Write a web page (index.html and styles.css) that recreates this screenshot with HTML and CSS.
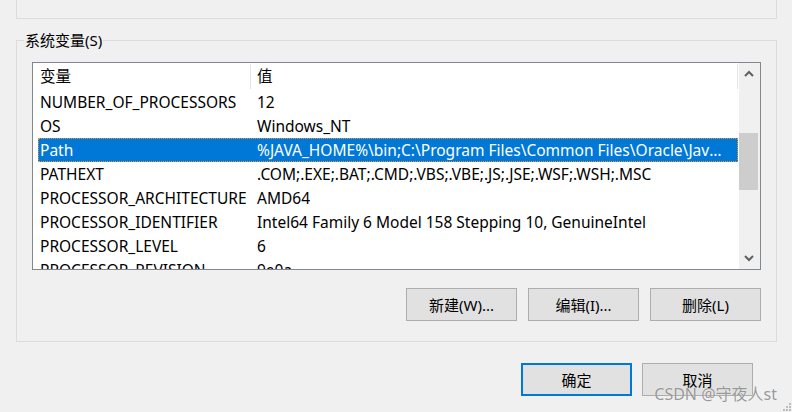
FILE: index.html
```html
<!DOCTYPE html>
<html lang="zh-CN">
<head>
    <meta charset="UTF-8">
    <title>环境变量</title>
    <link rel="stylesheet" href="styles.css">
</head>
<body>
    <div class="top-box"></div>

    <fieldset class="group">
        <legend>系统变量(S)</legend>
        <div class="list">
            <div class="list-main">
                <div class="list-head">
                    <div class="head-name">变量</div>
                    <div class="head-value">值</div>
                </div>
                <div class="row"><span class="col-name">NUMBER_OF_PROCESSORS</span><span class="col-value">12</span></div>
                <div class="row"><span class="col-name">OS</span><span class="col-value">Windows_NT</span></div>
                <div class="row selected"><span class="col-name">Path</span><span class="col-value">%JAVA_HOME%\bin;C:\Program Files\Common Files\Oracle\Java\javapath;C:\Windows\system32</span></div>
                <div class="row"><span class="col-name">PATHEXT</span><span class="col-value">.COM;.EXE;.BAT;.CMD;.VBS;.VBE;.JS;.JSE;.WSF;.WSH;.MSC</span></div>
                <div class="row"><span class="col-name">PROCESSOR_ARCHITECTURE</span><span class="col-value">AMD64</span></div>
                <div class="row"><span class="col-name">PROCESSOR_IDENTIFIER</span><span class="col-value">Intel64 Family 6 Model 158 Stepping 10, GenuineIntel</span></div>
                <div class="row"><span class="col-name">PROCESSOR_LEVEL</span><span class="col-value">6</span></div>
                <div class="row"><span class="col-name">PROCESSOR_REVISION</span><span class="col-value">9e0a</span></div>
            </div>
            <div class="scrollbar">
                <div class="arrow">
                    <svg width="10" height="7" viewBox="0 0 10 7"><polyline points="1,6 5,2 9,6" fill="none" stroke="#606060" stroke-width="2"/></svg>
                </div>
                <div class="track"><div class="thumb"></div></div>
                <div class="arrow">
                    <svg width="10" height="7" viewBox="0 0 10 7"><polyline points="1,1 5,5 9,1" fill="none" stroke="#606060" stroke-width="2"/></svg>
                </div>
            </div>
        </div>
        <div class="actions">
            <button>新建(W)...</button>
            <button>编辑(I)...</button>
            <button>删除(L)</button>
        </div>
    </fieldset>

    <div class="dialog-actions">
        <button class="primary">确定</button>
        <button>取消</button>
    </div>

    <div class="watermark">CSDN @守夜人st</div>
    <svg class="grip" width="10" height="10" viewBox="0 0 10 10">
        <rect x="8" y="2" width="2" height="2" fill="#bdbdbd"/>
        <rect x="5" y="5" width="2" height="2" fill="#bdbdbd"/>
        <rect x="8" y="5" width="2" height="2" fill="#bdbdbd"/>
        <rect x="2" y="8" width="2" height="2" fill="#bdbdbd"/>
        <rect x="5" y="8" width="2" height="2" fill="#bdbdbd"/>
        <rect x="8" y="8" width="2" height="2" fill="#bdbdbd"/>
    </svg>
</body>
</html>
```

FILE: styles.css
```css
body {
    margin: 0;
    width: 792px;
    height: 412px;
    overflow: hidden;
    position: relative;
    background: #f0f0f0;
    color: #000;
    font-family: "Noto Sans", "Noto Sans CJK SC", sans-serif;
    font-size: 15px;
}

.top-box {
    height: 18px;
    margin: 0 15px 0 16px;
    border: 1px solid #dcdcdc;
    border-top: 0;
}

.group {
    margin: 11px 15px 0 16px;
    padding: 12px 15px 20px 15px;
    border: 1px solid #dcdcdc;
    min-width: 0;
}

.group legend {
    margin-left: -8px;
    padding: 0 1px;
    height: 20px;
    line-height: 20px;
}

.list {
    display: flex;
    height: 206px;
    border: 1px solid #828790;
    background: #fff;
    font-size: 15.5px;
}

.list-main {
    flex: 1;
    min-width: 0;
    overflow: hidden;
}

.list-head {
    display: flex;
    height: 27px;
    line-height: 27px;
}

.head-name {
    width: 218px;
    padding-left: 7px;
    box-sizing: border-box;
    border-right: 1px solid #e5e5e5;
    margin: 1px 0;
    line-height: 25px;
}

.head-value {
    width: 487px;
    padding-left: 6px;
    box-sizing: border-box;
    border-right: 1px solid #e5e5e5;
    margin: 1px 0;
    line-height: 25px;
}

.row {
    display: flex;
    height: 24px;
    line-height: 24px;
    margin-left: 5px;
    margin-right: 1px;
    white-space: nowrap;
}

.col-name {
    width: 219px;
    flex-shrink: 0;
    padding-left: 2px;
    box-sizing: border-box;
    overflow: hidden;
}

.col-value {
    flex: 1;
    min-width: 0;
    padding-right: 8px;
    overflow: hidden;
    text-overflow: ellipsis;
}

.row.selected {
    background: #0078d7;
    color: #fff;
    outline: 1px dotted #f0953a;
    outline-offset: -1px;
}

.scrollbar {
    width: 21px;
    display: flex;
    flex-direction: column;
    background: #f0f0f0;
}

.arrow {
    height: 21px;
    display: flex;
    align-items: center;
    justify-content: center;
    padding-right: 1px;
}

.track {
    flex: 1;
}

.thumb {
    margin-top: 49px;
    width: 19px;
    height: 57px;
    background: #cdcdcd;
}

.actions {
    display: flex;
    justify-content: flex-end;
    gap: 11px;
    margin-top: 18px;
}

button {
    width: 111px;
    height: 33px;
    padding: 0;
    border: 1px solid #adadad;
    background: #e1e1e1;
    color: #000;
    font-family: "Noto Sans", "Noto Sans CJK SC", sans-serif;
    font-size: 15px;
}

button.primary {
    border: 2px solid #0078d7;
}

.dialog-actions {
    display: flex;
    justify-content: flex-end;
    gap: 10px;
    margin-top: 21px;
    padding-right: 39px;
}

.watermark {
    position: absolute;
    right: 15px;
    bottom: 8px;
    line-height: 20px;
    font-size: 16px;
    color: rgba(110, 110, 110, 0.7);
    text-shadow: 0 0 1px rgba(255, 255, 255, 0.8);
}

.grip {
    position: absolute;
    right: 1px;
    bottom: 1px;
}
```
